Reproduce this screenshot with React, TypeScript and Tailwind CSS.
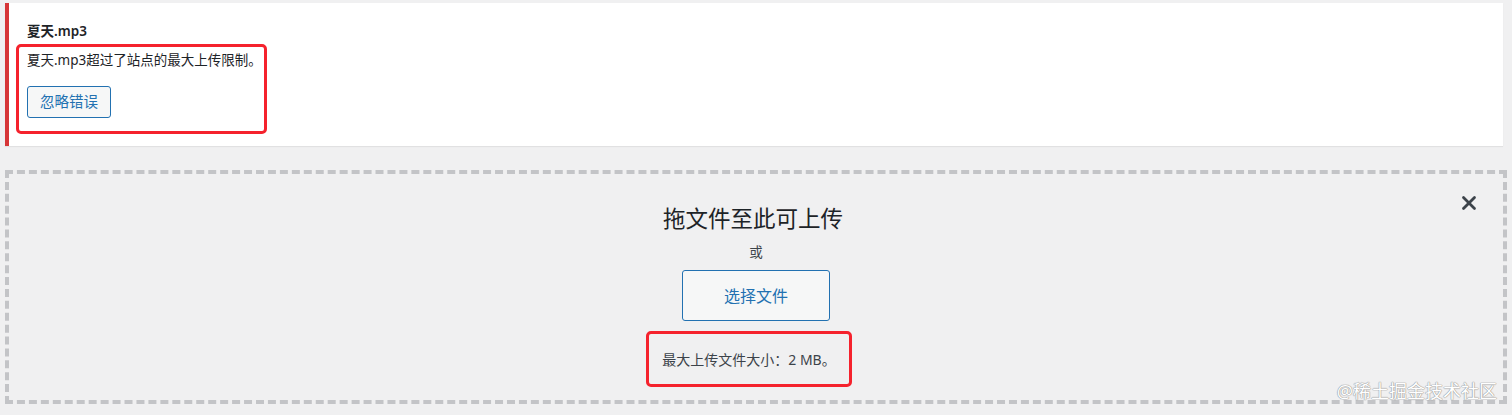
import { X } from "lucide-react"

const font = { fontFamily: '"Noto Sans", "Noto Sans CJK SC", sans-serif' }

export default function App() {
  return (
    <div className="relative min-h-[415px] w-[1512px] bg-[#f0f0f1] pt-[3px] text-[#1d2327]" style={font}>
      {/* upload error notice */}
      <div className="ml-[5px] mr-[9px] border-l-4 border-[#d63638] bg-white pb-[12px] pt-[18px] shadow-[0_1px_1px_rgba(0,0,0,0.06)]">
        <div className="pl-[18px] text-[13.5px] font-semibold leading-[20px]">夏天.mp3</div>
        <div className="ml-[7px] mt-[3px] w-[251px] rounded-[5px] border-[3px] border-[#f5222d] pb-[13px] pl-[8px] pt-[3px]">
          <p className="text-[13.5px] leading-[20px] text-[#1d2327]">夏天.mp3超过了站点的最大上传限制。</p>
          <button className="mt-[16px] h-[32px] rounded-[3px] border border-[#2271b1] bg-[#f6f7f7] px-[12px] text-[14.5px] text-[#2271b1]">
            忽略错误
          </button>
        </div>
      </div>

      {/* drop zone */}
      <div className="relative mx-[5px] mt-[24px] flex flex-col items-center border-4 border-dashed border-[#c3c4c7] pb-[13px] pt-[30px]">
        <button className="absolute right-[23px] top-[18px] text-[#3c434a]">
          <X className="h-[22px] w-[22px]" strokeWidth={3} />
        </button>
        <h2 className="ml-[-6px] text-[22.5px] leading-[30px] text-[#1d2327]">拖文件至此可上传</h2>
        <p className="mt-[8px] text-[13.5px] leading-[20px] text-[#3c434a]">或</p>
        <button className="mt-[8px] h-[51px] w-[148px] rounded-[3px] border border-[#2271b1] bg-[#f6f7f7] text-[16px] text-[#2271b1]">
          选择文件
        </button>
        <div className="mr-[14px] mt-[10px] rounded-[5px] border-[3px] border-[#f5222d] px-[13px] pb-[14px] pt-[16px]">
          <p className="text-[14px] leading-[20px] text-[#3c434a]">最大上传文件大小：2 MB。</p>
        </div>
      </div>

      {/* watermark */}
      <div
        className="absolute bottom-[12px] right-[15px] text-[18px] leading-[24px] text-white"
        style={{ textShadow: "0 0 1px #999, 0 0 1px #999, 0 0 1px #999" }}
      >
        @稀土掘金技术社区
      </div>
    </div>
  )
}
